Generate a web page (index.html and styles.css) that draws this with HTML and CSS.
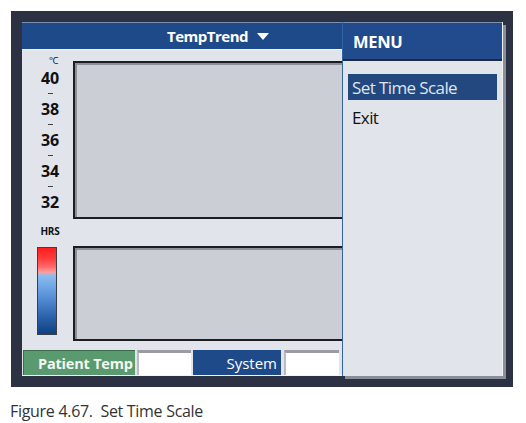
FILE: index.html
```html
<!DOCTYPE html>
<html>
<head>
<meta charset="utf-8">
<link rel="stylesheet" href="styles.css">
</head>
<body>
<div class="frame">
  <div class="screen">
    <div class="title">
      <span class="title-text">TempTrend</span>
      <svg class="caret" width="12" height="8" viewBox="0 0 12 8"><polygon points="0,0 12,0 6,7" fill="#fff"/></svg>
    </div>
    <div class="main">
      <div class="axis">
        <div class="unit">°C</div>
        <div class="num">40</div>
        <div class="tick"></div>
        <div class="num">38</div>
        <div class="tick"></div>
        <div class="num">36</div>
        <div class="tick"></div>
        <div class="num">34</div>
        <div class="tick"></div>
        <div class="num">32</div>
        <div class="hrs">HRS</div>
        <div class="colorbar"></div>
      </div>
      <div class="plots">
        <div class="plot plot-top"></div>
        <div class="plot plot-bottom"></div>
      </div>
    </div>
    <div class="tabs">
      <div class="tab tab-green">Patient Temp</div>
      <div class="tab tab-blank tab-w1"></div>
      <div class="tab tab-blue">System</div>
      <div class="tab tab-blank tab-w2"></div>
    </div>
    <div class="menu">
      <div class="menu-head">MENU</div>
      <div class="menu-items">
        <div class="menu-item selected">Set Time Scale</div>
        <div class="menu-item">Exit</div>
      </div>
    </div>
  </div>
</div>
<p class="caption">Figure 4.67.&nbsp; Set Time Scale</p>
</body>
</html>
```

FILE: styles.css
```css
html, body {
  margin: 0;
  padding: 0;
  background: #ffffff;
}
body {
  font-family: "Open Sans", "Noto Sans", "Liberation Sans", sans-serif;
  width: 526px;
  height: 423px;
  overflow: hidden;
}
.frame {
  margin: 11px 0 0 11px;
  width: 502px;
  height: 376px;
  box-sizing: border-box;
  padding: 11px 10px 11px 11px;
  background: #2c3244;
}
.screen {
  position: relative;
  width: 481px;
  height: 354px;
  background: #e1e4eb;
  display: flex;
  flex-direction: column;
}
.title {
  height: 28px;
  box-sizing: border-box;
  border-top: 1px solid #7d8fae;
  border-bottom: 1px solid #f2f4f8;
  background: #1f4a89;
  display: flex;
  align-items: center;
  padding-left: 145px;
  color: #ffffff;
}
.title-text {
  font-weight: 700;
  font-size: 15px;
  letter-spacing: -0.5px;
  line-height: 1;
}
.caret {
  margin-left: 9px;
  margin-top: 1px;
}
.main {
  flex: 1;
  display: flex;
}
.axis {
  width: 51px;
  box-sizing: border-box;
  padding-left: 5px;
  padding-top: 6px;
  display: flex;
  flex-direction: column;
  align-items: center;
  color: #111;
}
.unit {
  height: 10px;
  font-size: 9.5px;
  line-height: 10px;
  margin-left: 7px;
  margin-bottom: 4px;
  letter-spacing: -0.5px;
}
.num {
  height: 16px;
  line-height: 16px;
  font-size: 16px;
  font-weight: 700;
  letter-spacing: -0.2px;
}
.tick {
  height: 15px;
  display: flex;
  align-items: center;
  justify-content: center;
}
.tick::before {
  content: "";
  display: block;
  width: 5px;
  height: 1px;
  background: #444;
}
.hrs {
  margin-top: 16px;
  height: 11px;
  line-height: 11px;
  font-size: 10px;
  font-weight: 700;
  letter-spacing: -0.2px;
}
.colorbar {
  margin-top: 10px;
  margin-right: 6px;
  width: 20px;
  height: 88px;
  box-sizing: border-box;
  border: 1px solid #3a3f4a;
  background: linear-gradient(to bottom,
    #ff1e1e 0%, #ff3a3a 12%, #ff6a6a 22%, #ff9c9c 28%, #8cbcef 32%,
    #6fa6e6 45%, #4c86cf 62%, #2a63ab 80%, #0f3f80 100%);
}
.plots {
  width: 269px;
  padding-top: 11px;
  display: flex;
  flex-direction: column;
  gap: 27px;
}
.plot {
  box-sizing: border-box;
  background: #cbced5;
  border: 2px solid #1b1d22;
  border-right: none;
  box-shadow: inset 2px 2px 0 #8c9098;
}
.plot-top {
  height: 158px;
}
.plot-bottom {
  height: 95px;
}
.tabs {
  height: 27px;
  box-sizing: border-box;
  padding: 1px 0 1px 1px;
  display: flex;
  border-bottom: 1px solid #f4f5f8;
}
.tab {
  height: 25px;
  box-sizing: border-box;
  display: flex;
  align-items: center;
}
.tab-green {
  width: 112px;
  background: #5a9a6f;
  border-top: 1px solid #3b6b4c;
  border-left: 1px solid #3b6b4c;
  color: #f4f7f2;
  font-weight: 700;
  font-size: 14.5px;
  letter-spacing: -0.2px;
  padding-left: 14px;
}
.tab-blank {
  background: #ffffff;
  border-top: 3px solid #9a9ca2;
  border-left: 2px solid #b9bbc0;
}
.tab-w1 {
  width: 54px;
  margin-left: 2px;
}
.tab-w2 {
  width: 55px;
  margin-left: 3px;
}
.tab-blue {
  width: 88px;
  margin-left: 2px;
  background: #1f4a89;
  color: #ffffff;
  font-size: 15px;
  justify-content: flex-end;
  padding-right: 4px;
}
.menu {
  position: absolute;
  top: 0;
  right: 0;
  width: 161px;
  height: 354px;
  box-sizing: border-box;
  background: #e1e4eb;
  border-left: 1px solid #3264a4;
  border-right: 1px solid #f0f2f6;
  box-shadow: 3px 3px 0 #8a8e98;
  display: flex;
  flex-direction: column;
}
.menu-head {
  height: 39px;
  box-sizing: border-box;
  background: #214b8c;
  border-top: 1px solid #7d8fae;
  border-bottom: 2px solid #1a2a44;
  color: #ffffff;
  font-weight: 700;
  font-size: 16.5px;
  letter-spacing: -0.3px;
  display: flex;
  align-items: center;
  padding-left: 10px;
}
.menu-items {
  padding: 13px 5px 0 5px;
  display: flex;
  flex-direction: column;
  gap: 4px;
}
.menu-item {
  height: 26px;
  display: flex;
  align-items: center;
  padding-left: 4px;
  font-size: 17px;
  letter-spacing: -0.6px;
  color: #111;
}
.menu-item.selected {
  background: #23487f;
  color: #dfe5f1;
}
.caption {
  margin: 15px 0 0 10px;
  font-size: 16px;
  color: #333;
  letter-spacing: -0.3px;
  line-height: 18px;
}
```
